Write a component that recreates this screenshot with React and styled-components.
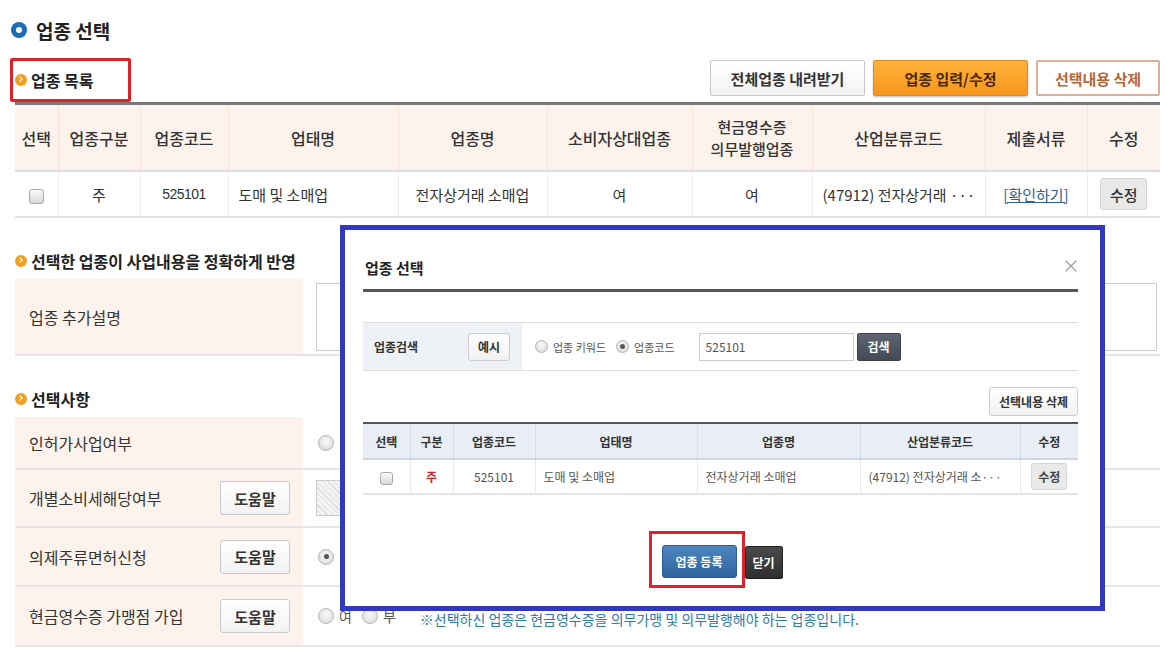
import React from "react";
import styled, { createGlobalStyle, css } from "styled-components";

const GlobalStyle = createGlobalStyle`
  body {
    margin: 0;
    background: #fff;
    font-family: "Noto Sans CJK KR", "Noto Sans", sans-serif;
    color: #333;
  }
`;

const listCols = [43, 82, 88, 170, 149, 145, 120, 173, 102, 73];
const modalCols = [47, 43, 82, 162, 163, 160, 58];

const App = () => {
  return (
    <>
      <GlobalStyle />
      <Page>
        <MainTitle>
          <BlueDot />
          업종 선택
        </MainTitle>

        <Toolbar>
          <RedBox>
            <SubTitle>
              <OrangeDot />
              업종 목록
            </SubTitle>
          </RedBox>
          <Actions>
            <TopButton>전체업종 내려받기</TopButton>
            <TopButton $variant="orange">업종 입력/수정</TopButton>
            <TopButton $variant="outline">선택내용 삭제</TopButton>
          </Actions>
        </Toolbar>

        <ListTable>
          <colgroup>
            {listCols.map((w, i) => (
              <col key={i} style={{ width: w }} />
            ))}
          </colgroup>
          <thead>
            <tr>
              <Th>선택</Th>
              <Th>업종구분</Th>
              <Th>업종코드</Th>
              <Th>업태명</Th>
              <Th>업종명</Th>
              <Th>소비자상대업종</Th>
              <Th $two>
                현금영수증
                <br />
                의무발행업종
              </Th>
              <Th>산업분류코드</Th>
              <Th>제출서류</Th>
              <Th>수정</Th>
            </tr>
          </thead>
          <tbody>
            <tr>
              <Td>
                <Check />
              </Td>
              <Td>주</Td>
              <Td $num>525101</Td>
              <Td $left>도매 및 소매업</Td>
              <Td>전자상거래 소매업</Td>
              <Td>여</Td>
              <Td>여</Td>
              <Td $left>(47912) 전자상거래 ···</Td>
              <Td>
                <DocLink>[확인하기]</DocLink>
              </Td>
              <Td>
                <EditButton>수정</EditButton>
              </Td>
            </tr>
          </tbody>
        </ListTable>

        <SectionTitle $top={31}>
          <OrangeDot />
          선택한 업종이 사업내용을 정확하게 반영
        </SectionTitle>
        <FormRow $h={77}>
          <Label>업종 추가설명</Label>
          <Field>
            <DescBox />
          </Field>
        </FormRow>

        <SectionTitle $top={31}>
          <OrangeDot />
          선택사항
        </SectionTitle>
        <FormRow $h={53}>
          <Label>인허가사업여부</Label>
          <Field>
            <Radio />
          </Field>
        </FormRow>
        <FormRow $h={58}>
          <Label>
            개별소비세해당여부
            <HelpButton>도움말</HelpButton>
          </Label>
          <Field>
            <Hatched />
          </Field>
        </FormRow>
        <FormRow $h={59}>
          <Label>
            의제주류면허신청
            <HelpButton>도움말</HelpButton>
          </Label>
          <Field>
            <Radio $on />
          </Field>
        </FormRow>
        <FormRow $h={60}>
          <Label>
            현금영수증 가맹점 가입
            <HelpButton>도움말</HelpButton>
          </Label>
          <Field>
            <Radio />
            <RadioText>여</RadioText>
            <Radio />
            <RadioText>부</RadioText>
            <Note>※선택하신 업종은 현금영수증을 의무가맹 및 의무발행해야 하는 업종입니다.</Note>
          </Field>
        </FormRow>

        <Modal>
          <ModalHead>
            <ModalTitle>업종 선택</ModalTitle>
            <CloseIcon viewBox="0 0 16 16">
              <path d="M2 2 L14 14 M14 2 L2 14" stroke="#999" strokeWidth="1.3" fill="none" />
            </CloseIcon>
          </ModalHead>

          <SearchBox>
            <SearchLabel>
              업종검색
              <SmallButton>예시</SmallButton>
            </SearchLabel>
            <SearchField>
              <Radio $small />
              <SmallText>업종 키워드</SmallText>
              <Radio $small $on />
              <SmallText>업종코드</SmallText>
              <CodeInput>525101</CodeInput>
              <DarkButton>검색</DarkButton>
            </SearchField>
          </SearchBox>

          <DeleteRow>
            <SmallButton $wide>선택내용 삭제</SmallButton>
          </DeleteRow>

          <ModalTable>
            <colgroup>
              {modalCols.map((w, i) => (
                <col key={i} style={{ width: w }} />
              ))}
            </colgroup>
            <thead>
              <tr>
                <MTh>선택</MTh>
                <MTh>구분</MTh>
                <MTh>업종코드</MTh>
                <MTh>업태명</MTh>
                <MTh>업종명</MTh>
                <MTh>산업분류코드</MTh>
                <MTh>수정</MTh>
              </tr>
            </thead>
            <tbody>
              <tr>
                <MTd>
                  <Check $small />
                </MTd>
                <MTd $red>주</MTd>
                <MTd>525101</MTd>
                <MTd $left>도매 및 소매업</MTd>
                <MTd $left>전자상거래 소매업</MTd>
                <MTd $left>(47912) 전자상거래 소···</MTd>
                <MTd>
                  <SmallEdit>수정</SmallEdit>
                </MTd>
              </tr>
            </tbody>
          </ModalTable>

          <ModalFooter>
            <RedFrame>
              <BlueButton>업종 등록</BlueButton>
            </RedFrame>
            <CloseButton>닫기</CloseButton>
          </ModalFooter>
        </Modal>
      </Page>
    </>
  );
};

const Page = styled.div`
  position: relative;
  width: 1176px;
  height: 665px;
  overflow: hidden;
  padding: 16px 16px 0 15px;
  box-sizing: border-box;
`;

const MainTitle = styled.h1`
  display: flex;
  align-items: center;
  gap: 9px;
  margin: 0 0 0 -4px;
  font-size: 19px;
  font-weight: 700;
  color: #222;
  height: 28px;
`;

const BlueDot = styled.span`
  position: relative;
  width: 16px;
  height: 16px;
  border-radius: 50%;
  background: #1c6db3;
  &::after {
    content: "";
    position: absolute;
    left: 5px;
    top: 5px;
    width: 6px;
    height: 6px;
    border-radius: 50%;
    background: #fff;
  }
`;

const OrangeDot = styled.span`
  position: relative;
  flex: none;
  width: 12px;
  height: 12px;
  border-radius: 50%;
  background: #f0a020;
  &::after {
    content: "";
    position: absolute;
    left: 3px;
    top: 3px;
    width: 3px;
    height: 3px;
    border-right: 1.5px solid #fff;
    border-top: 1.5px solid #fff;
    transform: rotate(45deg);
  }
`;

const Toolbar = styled.div`
  display: flex;
  justify-content: space-between;
  align-items: flex-end;
  margin: 14px 0 0 -5px;
`;

const RedBox = styled.div`
  border: 3px solid #e0202a;
  border-radius: 2px;
  padding: 0 34px 0 2px;
  height: 38px;
  display: flex;
  align-items: center;
`;

const SubTitle = styled.h2`
  display: flex;
  align-items: center;
  gap: 4px;
  margin: 0;
  font-size: 16px;
  font-weight: 700;
  color: #222;
`;

const Actions = styled.div`
  display: flex;
  gap: 8px;
  padding-bottom: 6px;
`;

const TopButton = styled.button`
  width: 155px;
  height: 36px;
  padding: 0;
  font-family: inherit;
  font-size: 15px;
  font-weight: 700;
  color: #333;
  background: linear-gradient(#fff, #f3f3f3);
  border: 1px solid #c8c8c8;
  border-radius: 2px;
  ${(p) =>
    p.$variant === "orange" &&
    css`
      color: #4a2a00;
      background: linear-gradient(#ffb53a, #f7941d);
      border-color: #e08b1c;
      box-shadow: 0 1px 2px rgba(0, 0, 0, 0.25);
    `}
  ${(p) =>
    p.$variant === "outline" &&
    css`
      width: 124px;
      color: #b7663a;
      background: #fff;
      border: 2px solid #d9b09a;
    `}
`;

const ListTable = styled.table`
  width: 1145px;
  border-collapse: collapse;
  table-layout: fixed;
  border-top: 3px solid #7a7a7a;
  border-bottom: 2px solid #e2e2e2;
`;

const Th = styled.th`
  height: 63px;
  background: #fdf3ec;
  font-size: ${(p) => (p.$two ? 15 : 16)}px;
  font-weight: 500;
  line-height: ${(p) => (p.$two ? 22 : 20)}px;
  color: #333;
  border-left: 1px solid #f4e6dc;
  border-bottom: 2px solid #ddd;
  &:first-child {
    border-left: none;
  }
`;

const Td = styled.td`
  height: 44px;
  font-size: 15px;
  color: #333;
  text-align: ${(p) => (p.$left ? "left" : "center")};
  padding: ${(p) => (p.$left ? "0 0 0 10px" : "0")};
  border-left: 1px solid #eee;
  white-space: nowrap;
  overflow: hidden;
  ${(p) =>
    p.$num &&
    css`
      font-family: "Liberation Sans Narrow", "Liberation Sans", sans-serif;
      font-size: 14px;
      letter-spacing: -0.5px;
    `}
  &:first-child {
    border-left: none;
  }
`;

const Check = styled.span`
  display: inline-block;
  vertical-align: middle;
  width: ${(p) => (p.$small ? 11 : 13)}px;
  height: ${(p) => (p.$small ? 11 : 13)}px;
  border: 1px solid #aaa;
  border-radius: 3px;
  background: linear-gradient(#fafafa, #d8d8d8);
`;

const DocLink = styled.span`
  color: #2c6391;
  text-decoration: underline;
  font-size: 15px;
`;

const EditButton = styled.button`
  width: 47px;
  height: 32px;
  font-family: inherit;
  font-size: 15px;
  font-weight: 500;
  color: #333;
  background: #e9e9e9;
  border: 1px solid #d4d4d4;
  border-radius: 3px;
`;

const SectionTitle = styled.h3`
  display: flex;
  align-items: center;
  gap: 4px;
  margin: ${(p) => p.$top}px 0 0 0;
  height: 24px;
  font-size: 16px;
  font-weight: 700;
  color: #222;
  white-space: nowrap;
  padding-bottom: 6px;
`;

const FormRow = styled.div`
  display: flex;
  width: 1145px;
  height: ${(p) => p.$h}px;
  border-bottom: 2px solid #e6e6e6;
  box-sizing: border-box;
`;

const Label = styled.div`
  width: 288px;
  flex: none;
  display: flex;
  align-items: center;
  justify-content: space-between;
  padding: 0 13px 0 14px;
  box-sizing: border-box;
  background: #fdf3ec;
  font-size: 16px;
  color: #333;
`;

const Field = styled.div`
  flex: 1;
  display: flex;
  align-items: center;
  padding-left: 13px;
`;

const DescBox = styled.div`
  width: 839px;
  height: 66px;
  border: 1px solid #ccc;
`;

const HelpButton = styled.button`
  width: 70px;
  height: 34px;
  font-family: inherit;
  font-size: 15px;
  font-weight: 700;
  color: #333;
  background: linear-gradient(#fff, #f2f2f2);
  border: 1px solid #c9c9c9;
  border-radius: 3px;
`;

const Radio = styled.span`
  flex: none;
  width: ${(p) => (p.$small ? 11 : 14)}px;
  height: ${(p) => (p.$small ? 11 : 14)}px;
  border-radius: 50%;
  border: 1px solid #b5b5b5;
  background: radial-gradient(circle at 50% 40%, #fafafa, #d5d5d5);
  margin-left: 2px;
  position: relative;
  ${(p) =>
    p.$on &&
    css`
      &::after {
        content: "";
        position: absolute;
        left: 50%;
        top: 50%;
        width: 5px;
        height: 5px;
        margin: -2.5px 0 0 -2.5px;
        border-radius: 50%;
        background: #555;
      }
    `}
`;

const RadioText = styled.span`
  font-size: 14px;
  color: #555;
  margin: 0 8px 0 5px;
`;

const Note = styled.span`
  margin: 6px 0 0 16px;
  font-size: 14px;
  color: #2d7ca6;
  white-space: nowrap;
`;

const Hatched = styled.div`
  width: 40px;
  height: 34px;
  border: 1px solid #ccc;
  background: repeating-linear-gradient(45deg, #f3f3f3 0 3px, #dcdcdc 3px 4px);
`;

/* modal */

const Modal = styled.div`
  position: absolute;
  left: 340px;
  top: 225px;
  width: 765px;
  height: 386px;
  box-sizing: border-box;
  border: 5px solid #3338c0;
  background: #fff;
  padding: 0 22px 0 18px;
`;

const ModalHead = styled.div`
  display: flex;
  justify-content: space-between;
  align-items: center;
  height: 59px;
  border-bottom: 3px solid #555;
`;

const ModalTitle = styled.h4`
  margin: 16px 0 0 2px;
  font-size: 15px;
  font-weight: 700;
  color: #222;
`;

const CloseIcon = styled.svg`
  width: 14px;
  height: 14px;
  margin: 12px 0 0 0;
`;

const SearchBox = styled.div`
  display: flex;
  height: 47px;
  margin-top: 30px;
  border-top: 1px solid #ddd;
  border-bottom: 1px solid #ddd;
`;

const SearchLabel = styled.div`
  width: 159px;
  flex: none;
  display: flex;
  align-items: center;
  justify-content: space-between;
  box-sizing: border-box;
  padding: 0 12px 0 11px;
  background: #eef1f6;
  font-size: 12px;
  font-weight: 700;
  color: #333;
`;

const SmallButton = styled.button`
  height: ${(p) => (p.$wide ? 29 : 28)}px;
  padding: 0 9px;
  font-family: inherit;
  font-size: 12px;
  font-weight: 700;
  color: #333;
  background: linear-gradient(#fff, #f1f1f1);
  border: 1px solid #ccc;
  border-radius: 3px;
`;

const SearchField = styled.div`
  flex: 1;
  display: flex;
  align-items: center;
  padding-left: 11px;
`;

const SmallText = styled.span`
  font-size: 11px;
  color: #555;
  margin: 0 8px 0 5px;
`;

const CodeInput = styled.div`
  width: 155px;
  height: 28px;
  box-sizing: border-box;
  border: 1px solid #ccc;
  margin-left: 16px;
  padding-left: 6px;
  display: flex;
  align-items: center;
  font-size: 12px;
  color: #555;
`;

const DarkButton = styled.button`
  width: 44px;
  height: 28px;
  margin-left: 3px;
  font-family: inherit;
  font-size: 12px;
  font-weight: 700;
  color: #fff;
  background: linear-gradient(#5d6571, #434a55);
  border: 1px solid #3a4049;
  border-radius: 2px;
`;

const DeleteRow = styled.div`
  display: flex;
  justify-content: flex-end;
  margin: 16px 0 6px;
`;

const ModalTable = styled.table`
  width: 715px;
  border-collapse: collapse;
  table-layout: fixed;
  border-top: 2px solid #555;
  border-bottom: 2px solid #e4e4e4;
`;

const MTh = styled.th`
  height: 32px;
  background: #e9eef6;
  font-size: 12px;
  font-weight: 700;
  color: #333;
  border-left: 1px solid #d8dfea;
  border-bottom: 2px solid #d0d6de;
  &:first-child {
    border-left: none;
  }
`;

const MTd = styled.td`
  height: 33px;
  font-size: 12px;
  color: ${(p) => (p.$red ? "#d2202a" : "#555")};
  font-weight: ${(p) => (p.$red ? 700 : 400)};
  text-align: ${(p) => (p.$left ? "left" : "center")};
  padding: ${(p) => (p.$left ? "0 0 0 8px" : "0")};
  border-left: 1px solid #e8e8e8;
  white-space: nowrap;
  overflow: hidden;
  &:first-child {
    border-left: none;
  }
`;

const SmallEdit = styled.button`
  width: 36px;
  height: 27px;
  font-family: inherit;
  font-size: 12px;
  font-weight: 700;
  color: #444;
  background: #e9e9e9;
  border: 1px solid #d6d6d6;
  border-radius: 3px;
`;

const ModalFooter = styled.div`
  display: flex;
  justify-content: center;
  align-items: center;
  margin-top: 36px;
  padding-right: 10px;
`;

const RedFrame = styled.div`
  border: 3px solid #e0202a;
  padding: 11px 5px 7px 10px;
`;

const BlueButton = styled.button`
  width: 75px;
  height: 33px;
  font-family: inherit;
  font-size: 12px;
  font-weight: 700;
  color: #fff;
  background: linear-gradient(#4d85c0, #2f649e);
  border: 1px solid #2a5a8f;
  border-radius: 3px;
`;

const CloseButton = styled.button`
  width: 38px;
  height: 33px;
  margin: 6px 0 0 0;
  font-family: inherit;
  font-size: 12px;
  font-weight: 700;
  color: #fff;
  background: linear-gradient(#4a4a4a, #2f2f2f);
  border: 1px solid #222;
  border-radius: 2px;
`;

export default App;
